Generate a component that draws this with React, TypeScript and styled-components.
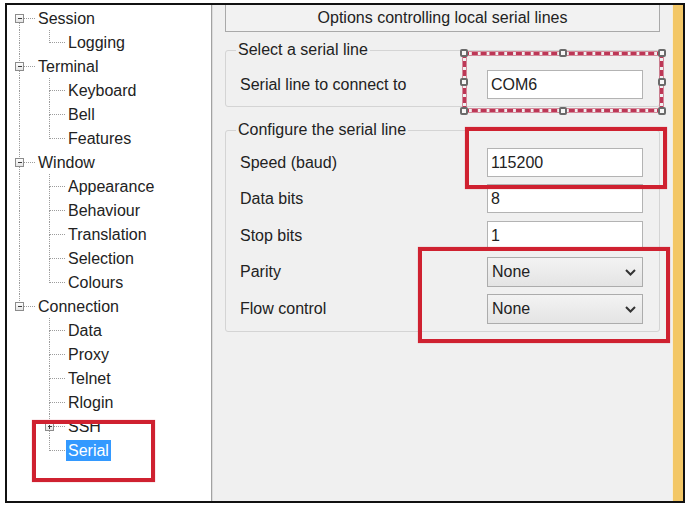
import styled, { createGlobalStyle, css } from 'styled-components';

type TreeItem = {
  label: string;
  children?: TreeItem[];
  collapsed?: boolean;
  selected?: boolean;
};

type GuideSpec = {
  up?: boolean;
  down?: boolean;
  branch?: boolean;
  box?: 'minus' | 'plus';
};

type TreeRowData = {
  label: string;
  guides: GuideSpec[];
  selected?: boolean;
};

const TREE: TreeItem[] = [
  { label: 'Session', children: [{ label: 'Logging' }] },
  {
    label: 'Terminal',
    children: [{ label: 'Keyboard' }, { label: 'Bell' }, { label: 'Features' }],
  },
  {
    label: 'Window',
    children: [
      { label: 'Appearance' },
      { label: 'Behaviour' },
      { label: 'Translation' },
      { label: 'Selection' },
      { label: 'Colours' },
    ],
  },
  {
    label: 'Connection',
    children: [
      { label: 'Data' },
      { label: 'Proxy' },
      { label: 'Telnet' },
      { label: 'Rlogin' },
      { label: 'SSH', collapsed: true },
      { label: 'Serial', selected: true },
    ],
  },
];

// turn the nested tree into flat rows, each with the connector cells it needs
const flatten = (items: TreeItem[]): TreeRowData[] => {
  const rows: TreeRowData[] = [];
  items.forEach((item, i) => {
    const lastTop = i === items.length - 1;
    rows.push({
      label: item.label,
      guides: [{ up: i > 0, down: !lastTop, branch: true, box: 'minus' }],
    });
    const kids = item.children ?? [];
    kids.forEach((child, j) => {
      rows.push({
        label: child.label,
        selected: child.selected,
        guides: [
          { up: !lastTop, down: !lastTop },
          {
            up: true,
            down: j < kids.length - 1,
            branch: true,
            box: child.collapsed ? 'plus' : undefined,
          },
        ],
      });
    });
  });
  return rows;
};

const Guide = ({ up, down, branch, box }: GuideSpec) => (
  <GuideSvg width="30" height="24" viewBox="0 0 30 24">
    <defs>
      <linearGradient id="boxFill" x1="0" y1="0" x2="0" y2="1">
        <stop offset="0" stopColor="#ffffff" />
        <stop offset="1" stopColor="#e2e2e2" />
      </linearGradient>
    </defs>
    {up && <line className="dot" x1="12.5" y1="0" x2="12.5" y2={box ? 8 : 12.5} />}
    {down && <line className="dot" x1="12.5" y1={box ? 17 : 12.5} x2="12.5" y2="24" />}
    {branch && <line className="dot" x1={box ? 17 : 13} y1="12.5" x2="29" y2="12.5" />}
    {box && (
      <g>
        <rect x="8.5" y="8.5" width="8" height="8" rx="1" fill="url(#boxFill)" stroke="#8c8c8c" />
        <path d="M10.5 12.5h4" stroke="#3c3c3c" />
        {box === 'plus' && <path d="M12.5 10.5v4" stroke="#3c3c3c" />}
      </g>
    )}
  </GuideSvg>
);

const Chevron = () => (
  <svg width="11" height="7" viewBox="0 0 11 7">
    <path d="M1 1l4.5 4.5L10 1" fill="none" stroke="#333" strokeWidth="2" />
  </svg>
);

const App = () => {
  const rows = flatten(TREE);

  return (
    <>
      <GlobalStyle />
      <Frame>
        <TreePane>
          {rows.map((row) => (
            <TreeRow key={row.label}>
              {row.guides.map((g, idx) => (
                <Guide key={idx} {...g} />
              ))}
              <TreeLabel $selected={row.selected}>
                {row.label}
                {row.selected && <TreeCallout />}
              </TreeLabel>
            </TreeRow>
          ))}
        </TreePane>
        <Splitter />
        <OptionsPane>
          <Header>Options controlling local serial lines</Header>

          <Group $gap={9}>
            <Legend>Select a serial line</Legend>
            <FormGrid $rows="29px" $padTop={11} $padBottom={7}>
              <Label $row={1} $h={29}>Serial line to connect to</Label>
              <TextBox $row={1} readOnly value="COM6" />
              <SelectionFrame>
                <Handle $x="left" $y="top" />
                <Handle $x="mid" $y="top" />
                <Handle $x="right" $y="top" />
                <Handle $x="left" $y="mid" />
                <Handle $x="right" $y="mid" />
                <Handle $x="left" $y="bottom" />
                <Handle $x="mid" $y="bottom" />
                <Handle $x="right" $y="bottom" />
              </SelectionFrame>
            </FormGrid>
          </Group>

          <Group $gap={14}>
            <Legend>Configure the serial line</Legend>
            <FormGrid $rows="36px 37px 36px 37px 37px" $padTop={9} $padBottom={0}>
              <Label $row={1} $h={29}>Speed (baud)</Label>
              <TextBox $row={1} readOnly value="115200" />
              <Label $row={2} $h={29}>Data bits</Label>
              <TextBox $row={2} readOnly value="8" />
              <Label $row={3} $h={29}>Stop bits</Label>
              <TextBox $row={3} readOnly value="1" />
              <Label $row={4} $h={30}>Parity</Label>
              <Dropdown $row={4}>
                <span>None</span>
                <Chevron />
              </Dropdown>
              <Label $row={5} $h={30}>Flow control</Label>
              <Dropdown $row={5}>
                <span>None</span>
                <Chevron />
              </Dropdown>
              <GridCallout $row="1" $m="-21px -24px -5px -22px" />
              <GridCallout $row="4 / 6" $m="-10px -27px -12px -69px" />
            </FormGrid>
          </Group>
        </OptionsPane>
        <YellowStrip />
      </Frame>
    </>
  );
};

export default App;

const GlobalStyle = createGlobalStyle`
  * {
    box-sizing: border-box;
  }

  html,
  body {
    margin: 0;
    padding: 0;
    background: #ffffff;
  }

  body {
    font-family: 'Liberation Sans', Arial, sans-serif;
    font-size: 16px;
    color: #222;
  }
`;

const redFrame = css`
  border: 4px solid #cf2130;
  box-shadow: 0 0 1px rgba(207, 33, 48, 0.5);
  pointer-events: none;
`;

const Frame = styled.div`
  display: flex;
  width: 680px;
  height: 500px;
  margin: 3px 0 0 5px;
  border: 2px solid #111;
`;

const TreePane = styled.div`
  width: 205px;
  background: #ffffff;
  padding-top: 1px;
  display: flex;
  flex-direction: column;
`;

const TreeRow = styled.div`
  display: flex;
  align-items: center;
  height: 24px;
`;

const GuideSvg = styled.svg`
  flex: none;
  display: block;
  shape-rendering: crispEdges;

  .dot {
    stroke: #9c9c9c;
    stroke-width: 1;
    stroke-dasharray: 1 1;
  }
`;

const TreeLabel = styled.span<{ $selected?: boolean }>`
  position: relative;
  margin-left: -1px;
  padding: 0 2px;
  line-height: 21px;
  white-space: nowrap;
  background: ${({ $selected }) => ($selected ? '#3399ff' : 'transparent')};
  color: ${({ $selected }) => ($selected ? '#ffffff' : '#222')};
`;

const TreeCallout = styled.span`
  ${redFrame};
  position: absolute;
  top: -20px;
  bottom: -21px;
  left: -34px;
  right: -44px;
`;

const Splitter = styled.div`
  width: 2px;
  flex: none;
  background: linear-gradient(to right, #a2a2a2 50%, #dcdcdc 50%);
`;

const OptionsPane = styled.div`
  flex: 1;
  display: flex;
  flex-direction: column;
  padding: 0 12px;
  background: #f0f0f0;
`;

const Header = styled.div`
  height: 27px;
  display: flex;
  align-items: center;
  justify-content: center;
  border: 1px solid #a9a9a9;
  border-top: none;
  background: #f2f2f2;
  color: #222;
`;

const Group = styled.fieldset<{ $gap: number }>`
  margin: ${({ $gap }) => $gap}px 0 0;
  padding: 0 16px 0 14px;
  min-width: 0;
  border: 1px solid #d4d4d4;
  border-radius: 3px;
`;

const Legend = styled.legend`
  margin-left: -4px;
  padding: 0 2px;
  line-height: 18px;
  color: #222;
`;

const FormGrid = styled.div<{ $rows: string; $padTop: number; $padBottom: number }>`
  display: grid;
  grid-template-columns: 247px 156px;
  grid-template-rows: ${({ $rows }) => $rows};
  align-items: start;
  padding: ${({ $padTop, $padBottom }) => `${$padTop}px 0 ${$padBottom}px`};
`;

const Label = styled.span<{ $row: number; $h: number }>`
  grid-column: 1;
  grid-row: ${({ $row }) => $row};
  line-height: ${({ $h }) => $h}px;
  white-space: nowrap;
`;

const TextBox = styled.input<{ $row: number }>`
  grid-column: 2;
  grid-row: ${({ $row }) => $row};
  width: 156px;
  height: 29px;
  margin: 0;
  padding: 0 3px;
  border: 1px solid #b3b3b3;
  background: #ffffff;
  font-family: 'Liberation Sans', Arial, sans-serif;
  font-size: 16px;
  color: #222;
  outline: none;
`;

const Dropdown = styled.div<{ $row: number }>`
  grid-column: 2;
  grid-row: ${({ $row }) => $row};
  height: 30px;
  display: flex;
  align-items: center;
  justify-content: space-between;
  padding: 0 6px 0 4px;
  border: 1px solid #acacac;
  background: linear-gradient(#f3f3f3, #e4e4e4);
  color: #222;
`;

const GridCallout = styled.div<{ $row: string; $m: string }>`
  ${redFrame};
  grid-column: 2;
  grid-row: ${({ $row }) => $row};
  align-self: stretch;
  margin: ${({ $m }) => $m};
`;

const SelectionFrame = styled.div`
  grid-column: 2;
  grid-row: 1;
  align-self: stretch;
  position: relative;
  margin: -18px -20px -13px -24px;
  border: 3px dashed #bd3756;
  box-shadow: 0 0 0 1px rgba(189, 55, 86, 0.55), inset 0 0 0 1px rgba(189, 55, 86, 0.55);
  pointer-events: none;
`;

const handlePos = (side: 'left' | 'mid' | 'right' | 'top' | 'bottom', axis: 'x' | 'y') => {
  const start = axis === 'x' ? 'left' : 'top';
  const end = axis === 'x' ? 'right' : 'bottom';
  if (side === 'mid') return `${start}: calc(50% - 4px);`;
  if (side === 'left' || side === 'top') return `${start}: -6px;`;
  return `${end}: -6px;`;
};

const Handle = styled.span<{ $x: 'left' | 'mid' | 'right'; $y: 'top' | 'mid' | 'bottom' }>`
  position: absolute;
  width: 8px;
  height: 8px;
  border: 2px solid #6a6a6a;
  border-radius: 2px;
  background: #f6f6f6;
  ${({ $x }) => handlePos($x, 'x')}
  ${({ $y }) => handlePos($y, 'y')}
`;

const YellowStrip = styled.div`
  width: 11px;
  flex: none;
  border-left: 1px solid #f6eedb;
  background: #f3c766;
`;
